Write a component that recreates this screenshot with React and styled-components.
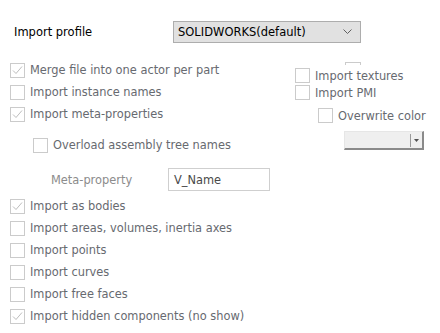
import React from "react";
import styled, { createGlobalStyle } from "styled-components";

const Global = createGlobalStyle`
  html, body { margin: 0; padding: 0; background: #ffffff; }
  body { width: 440px; height: 333px; overflow: hidden; font-family: "DejaVu Sans", Tahoma, sans-serif; font-size: 11.4px; }
`;

const Page = styled.div`
  width: 440px;
  height: 333px;
  padding-top: 21px;
  box-sizing: border-box;
`;

const Header = styled.div`
  display: flex;
  align-items: center;
  height: 22px;
  padding-left: 14px;
`;

const HeaderLabel = styled.span`
  width: 159px;
  color: #000;
  font-size: 11.5px;
`;

const Select = styled.div`
  width: 188px;
  height: 22px;
  box-sizing: border-box;
  border: 1px solid #adadad;
  background: #e1e1e1;
  display: flex;
  align-items: center;
  justify-content: space-between;
  padding: 0 8px 0 4px;
  color: #000;
  font-size: 11.5px;
`;

const Top = styled.div`
  display: grid;
  grid-template-columns: 285px 1fr;
  margin-top: 16px;
  padding-left: 10px;
`;

const Col = styled.div`
  display: flex;
  flex-direction: column;
`;

const Row = styled.label`
  display: flex;
  align-items: center;
  gap: 5px;
  height: ${(p) => p.$h || 22}px;
  margin-top: ${(p) => p.$mt || 0}px;
  margin-left: ${(p) => p.$ml || 0}px;
  color: #676a70;
  white-space: nowrap;
`;

const Box = styled.span`
  width: 15px;
  height: 15px;
  box-sizing: border-box;
  border: 1px solid #cbcbcb;
  background: #fff;
  display: flex;
  align-items: center;
  justify-content: center;
  flex: none;
`;

const Stub = styled.div`
  width: 16px;
  height: 3px;
  box-sizing: border-box;
  border: 1px solid #cbcbcb;
  border-bottom: none;
  margin: 3px 0 2px 50px;
`;

const MetaRow = styled.div`
  display: flex;
  align-items: center;
  margin-top: 12px;
  padding-left: 41px;
  height: 23px;
`;

const MetaLabel = styled.span`
  width: 117px;
  color: #8c8c8c;
`;

const Input = styled.div`
  width: 102px;
  height: 23px;
  box-sizing: border-box;
  border: 1px solid #cfcfcf;
  display: flex;
  align-items: center;
  padding-left: 5px;
  color: #4a4a4a;
`;

const Combo = styled.div`
  width: 80px;
  height: 19px;
  box-sizing: border-box;
  margin: 6px 0 0 49px;
  background: #efefef;
  border-top: 1px solid #e6e6e6;
  border-left: 1px solid #e6e6e6;
  border-right: 2px solid #8a8a8a;
  border-bottom: 2px solid #8a8a8a;
  display: flex;
  justify-content: flex-end;
  align-items: center;
`;

const ComboSep = styled.span`
  width: 1px;
  height: 13px;
  background: #9a9a9a;
  margin-right: 3px;
`;

const Bottom = styled.div`
  display: flex;
  flex-direction: column;
  padding-left: 10px;
  margin-top: 4px;
`;

const Check = () => (
  <svg width="13" height="13" viewBox="0 0 13 13">
    <path d="M2 6.5 L5 9.5 L11 2.5" fill="none" stroke="#bdbdbd" strokeWidth="1" />
  </svg>
);

const Opt = ({ checked, children, ...rest }) => (
  <Row {...rest}>
    <Box>{checked && <Check />}</Box>
    <span>{children}</span>
  </Row>
);

export default function App() {
  return (
    <>
      <Global />
      <Page>
        <Header>
          <HeaderLabel>Import profile</HeaderLabel>
          <Select>
            <span>SOLIDWORKS(default)</span>
            <svg width="9" height="6" viewBox="0 0 9 6">
              <path d="M0.5 0.5 L4.5 4.5 L8.5 0.5" fill="none" stroke="#606060" strokeWidth="1" />
            </svg>
          </Select>
        </Header>
        <Top>
          <Col>
            <Opt checked>Merge file into one actor per part</Opt>
            <Opt>Import instance names</Opt>
            <Opt checked>Import meta-properties</Opt>
            <Opt $mt={9} $ml={23}>Overload assembly tree names</Opt>
            <MetaRow>
              <MetaLabel>Meta-property</MetaLabel>
              <Input>V_Name</Input>
            </MetaRow>
          </Col>
          <Col>
            <Stub />
            <Opt $h={17}>Import textures</Opt>
            <Opt $h={17}>Import PMI</Opt>
            <Opt $h={19} $mt={5} $ml={23}>Overwrite color</Opt>
            <Combo>
              <ComboSep />
              <svg width="5" height="3" viewBox="0 0 5 3" style={{ marginRight: 3 }}>
                <path d="M0 0 H5 L2.5 3 Z" fill="#505050" />
              </svg>
            </Combo>
          </Col>
        </Top>
        <Bottom>
          <Opt checked>Import as bodies</Opt>
          <Opt>Import areas, volumes, inertia axes</Opt>
          <Opt>Import points</Opt>
          <Opt>Import curves</Opt>
          <Opt>Import free faces</Opt>
          <Opt checked>Import hidden components (no show)</Opt>
        </Bottom>
      </Page>
    </>
  );
}
